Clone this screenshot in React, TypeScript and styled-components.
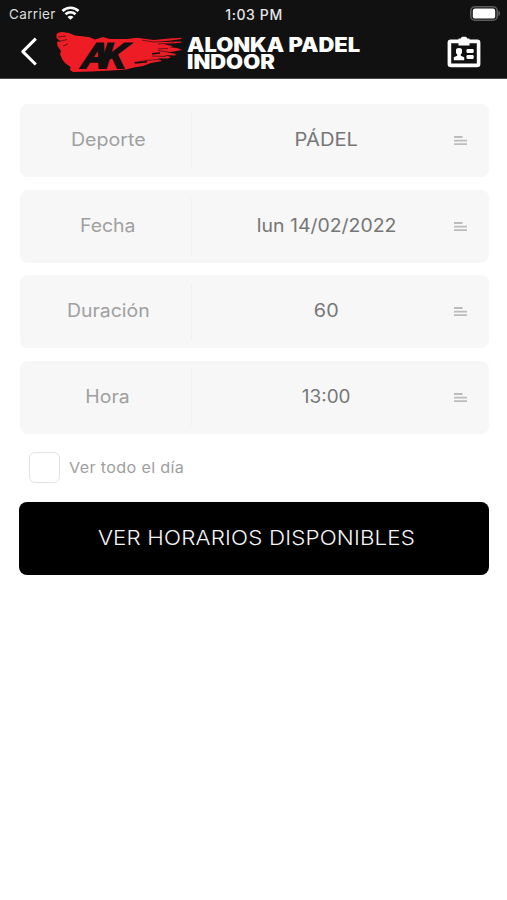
import React from "react";
import styled, { createGlobalStyle } from "styled-components";

const GlobalStyle = createGlobalStyle`
  * { box-sizing: border-box; }
  body { margin: 0; background: #fff; font-family: Inter, "Liberation Sans", sans-serif; }
`;

const Screen = styled.div`
  min-height: 900px;
  background: #fff;
`;

const Header = styled.header`
  height: 79px;
  background: #111;
  color: #fff;
  border-bottom: 1px solid #4a4a4a;
`;

const StatusBar = styled.div`
  height: 28px;
  display: grid;
  grid-template-columns: 1fr auto 1fr;
  align-items: center;
  padding: 0 6px 0 9px;
`;

const Carrier = styled.div`
  display: flex;
  align-items: center;
  gap: 5px;
  font-size: 13.5px;
  letter-spacing: 0.35px;
  color: #dcdcdc;
  svg { margin-top: -2px; }
`;

const Clock = styled.div`
  font-size: 14px;
  font-weight: 500;
  letter-spacing: 0.6px;
  margin-right: 2px;
  color: #e6e6e6;
`;

const BatterySlot = styled.div`
  display: flex;
  justify-content: flex-end;
`;

const NavBar = styled.div`
  height: 50px;
  display: flex;
  align-items: flex-start;
  padding-right: 26px;
`;

const IconButton = styled.button<{ $left?: number; $top: number }>`
  border: 0;
  padding: 0;
  background: none;
  color: #fff;
  display: block;
  margin: ${(p) => p.$top}px 0 0 ${(p) => p.$left ?? 0}px;
  svg { display: block; }
`;

const Logo = styled.svg`
  display: block;
  margin: 2px 0 0 16px;
`;

const Title = styled.h1`
  margin: 9px 0 0 3px;
  flex: 1;
  font-size: 19.5px;
  font-weight: 900;
  line-height: 16.5px;
`;

const TitleLine = styled.span<{ $stretch: number }>`
  display: block;
  white-space: nowrap;
  transform: scaleX(${(p) => p.$stretch});
  transform-origin: left;
`;

const Form = styled.main`
  display: flex;
  flex-direction: column;
  padding: 25px 18px 0 20px;
`;

const Field = styled.div`
  height: 73px;
  margin: 0 0.5px 12.5px 0;
  display: grid;
  grid-template-columns: 172px 1fr;
  align-items: center;
  border-radius: 8px;
  background: #f7f7f7;
`;

const Label = styled.div`
  height: 57px;
  display: flex;
  align-items: center;
  justify-content: center;
  padding: 0 0 2px 5px;
  border-right: 1px solid #f1f1f1;
  font-size: 18px;
  color: #a0a0a0;
`;

const Stretched = styled.span<{ $stretch: number }>`
  display: inline-block;
  white-space: nowrap;
  transform: scaleX(${(p) => p.$stretch});
`;

const Value = styled.div`
  display: grid;
  grid-template-columns: 1fr 14px;
  align-items: center;
  padding: 0 21px 0 7px;
`;

const ValueText = styled.div`
  text-align: center;
  padding-bottom: 2px;
  font-size: 18px;
  color: #767676;
`;

const CheckRow = styled.label`
  display: flex;
  align-items: center;
  gap: 9px;
  height: 31px;
  margin: 6px 0 0 9px;
  font-size: 15px;
  letter-spacing: 0.3px;
  color: #a0a0a0;
`;

const CheckText = styled(Stretched)`
  transform-origin: left;
`;

const CheckBox = styled.input`
  appearance: none;
  width: 31px;
  height: 31px;
  margin: 0;
  border: 1.5px solid #e2e2e2;
  border-radius: 6px;
  background: #fff;
`;

const Submit = styled.button`
  height: 73px;
  margin: 19px 0 0 -1px;
  padding: 0 0 1px 5px;
  border: 0;
  border-radius: 8px;
  background: #000;
  color: #f5f5f5;
  font: 300 19.5px Inter, sans-serif;
  letter-spacing: 0.15px;
`;

const WifiIcon = () => (
  <svg width="19" height="14" viewBox="0 0 18 14" fill="none" stroke="#fff" strokeWidth="2.6">
    <path d="M1 5C5.4 .6 12.6 .6 17 5" />
    <path d="M4 8.3C6.8 5.6 11.2 5.6 14 8.3" />
    <path d="M9 13.7L6 10.9C7.7 9.4 10.3 9.4 12 10.9Z" fill="#fff" stroke="none" />
  </svg>
);

const BatteryIcon = () => (
  <svg width="31" height="16" viewBox="0 0 31 16">
    <rect x=".8" y=".8" width="26.4" height="13.4" rx="4" fill="none" stroke="#5c5c5c" strokeWidth="1.6" />
    <rect x="2.8" y="2.6" width="22.4" height="10" rx="2.2" fill="#fff" />
    <path d="M28.4 4.6Q32 7.4 28.4 10.4Z" fill="#5c5c5c" />
  </svg>
);

const BackIcon = () => (
  <svg width="18" height="29" viewBox="0 0 18 29" fill="none" stroke="#fff" strokeWidth="3" strokeLinejoin="round">
    <path d="M15.8 1.6L2.8 14.6L15.8 27.5" />
  </svg>
);

const BadgeIcon = () => (
  <svg width="34" height="32" viewBox="0 0 34 32" fill="#fff">
    <rect x="2.4" y="5.4" width="29.2" height="24" rx="1.5" fill="none" stroke="#fff" strokeWidth="3.6" />
    <path d="M11.5 2.6H14Q14 .8 15.5 .8H18.5Q20 .8 20 2.6H22.5V9.5H11.5Z" />
    <path d="M9 14.2Q9 12 12 12T15 14.2V16.5Q14.5 18.2 13.8 18.5V19.7L17.2 21.3V24.2H6.8V21.3L10.2 19.7V18.5Q9 17.5 9 16.5Z" />
    <rect x="19.5" y="13" width="7.2" height="3.9" rx="1.2" />
    <rect x="19.5" y="19" width="7.2" height="3.9" rx="1.2" />
  </svg>
);

const BrandLogo = () => (
  <Logo width="130" height="46" viewBox="54 30 130 46" role="img" aria-label="AK">
    <path
      fill="#ee1c25"
      d="M56.5 34Q59 31.5 64 32.2L69 33L75 35.5L89 37L95 39.5L103 37L110 39L127 39L137 37.8L154 40L169 38.5L182 37.7L181 39L161 42L181 41.5L182 42.5L164 44.5L173 46L170 47.3L177 48L182 50L174 51.5L167 52.3L176 54L175 55.5L164 55L171 57L168 58.5L158 58.5L162 61L151 63L143 66L134 67.5L126 69.5L112 70.5L91 71.5L73 72L70 70L70.5 67L65 63L62 59L60 54L61 51L57.5 46L57 42L60 41L56.5 38Z"
    />
    <g fill="none" stroke="#111" strokeWidth=".6">
      <path d="M59 41.5L67 39.5M58 37L66 36M63 46L68 44M142 40.2L154 42L169 41.2M158 44L174 43M158 50.5L169 52.2M134 62.5L146 60.5L162 59M152 56L166 56.5M158 48.8L168 48.5" />
      <path strokeWidth="1.6" d="M135 63L147 61.7M152 53.8L160 53" />
    </g>
    <g transform="translate(80 68) skewX(-6)" fill="#111" stroke="#111" strokeWidth="2" fontFamily="Liberation Sans, sans-serif" fontSize="35.5" fontWeight="700" fontStyle="italic">
      <text x="1" textLength="26" lengthAdjust="spacingAndGlyphs">A</text>
      <text x="20" textLength="26" lengthAdjust="spacingAndGlyphs">K</text>
    </g>
  </Logo>
);

const ListIcon = () => (
  <svg width="14" height="11" viewBox="0 0 14 11" stroke="#bcbcbc" strokeWidth="1.8">
    <path d="M0 2H8.5M0 5.6H13M0 9.2H13" />
  </svg>
);

const fields = [
  { label: "Deporte", labelStretch: 1.09, value: "PÁDEL", valueStretch: 1.12 },
  { label: "Fecha", labelStretch: 1.08, value: "lun 14/02/2022", valueStretch: 1.08 },
  { label: "Duración", labelStretch: 1.08, value: "60", valueStretch: 1.1 },
  { label: "Hora", labelStretch: 1.08, value: "13:00", valueStretch: 1.05 },
];

export default function App() {
  return (
    <Screen>
      <GlobalStyle />
      <Header>
        <StatusBar>
          <Carrier>Carrier <WifiIcon /></Carrier>
          <Clock>1:03 PM</Clock>
          <BatterySlot><BatteryIcon /></BatterySlot>
        </StatusBar>
        <NavBar>
          <IconButton $left={20} $top={9} aria-label="Atrás"><BackIcon /></IconButton>
          <BrandLogo />
          <Title>
            <TitleLine $stretch={1.125}>ALONKA PADEL</TitleLine>
            <TitleLine $stretch={1.125}>INDOOR</TitleLine>
          </Title>
          <IconButton $top={8} aria-label="Carnet"><BadgeIcon /></IconButton>
        </NavBar>
      </Header>
      <Form>
        {fields.map((f) => (
          <Field key={f.label}>
            <Label><Stretched $stretch={f.labelStretch}>{f.label}</Stretched></Label>
            <Value>
              <ValueText><Stretched $stretch={f.valueStretch}>{f.value}</Stretched></ValueText>
              <ListIcon />
            </Value>
          </Field>
        ))}
        <CheckRow>
          <CheckBox type="checkbox" />
          <CheckText $stretch={1.08}>Ver todo el día</CheckText>
        </CheckRow>
        <Submit><Stretched $stretch={1.145}>VER HORARIOS DISPONIBLES</Stretched></Submit>
      </Form>
    </Screen>
  );
}
